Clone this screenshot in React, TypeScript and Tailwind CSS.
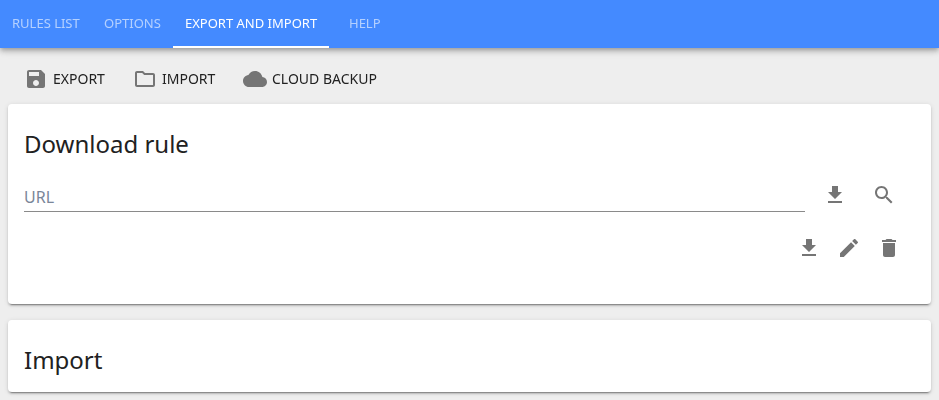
import React from 'react';

const ICONS = {
  save: 'M17 3H5c-1.11 0-2 .9-2 2v14c0 1.1.89 2 2 2h14c1.1 0 2-.9 2-2V7l-4-4zm-5 16c-1.66 0-3-1.34-3-3s1.34-3 3-3 3 1.34 3 3-1.34 3-3 3zm3-10H5V5h10v4z',
  folder: 'M9.17 6l2 2H20v10H4V6h5.17M10 4H4c-1.1 0-1.99.9-1.99 2L2 18c0 1.1.9 2 2 2h16c1.1 0 2-.9 2-2V8c0-1.1-.9-2-2-2h-8l-2-2z',
  cloud: 'M19.35 10.04C18.67 6.59 15.64 4 12 4 9.11 4 6.6 5.64 5.35 8.04 2.34 8.36 0 10.91 0 14c0 3.31 2.69 6 6 6h13c2.76 0 5-2.24 5-5 0-2.64-2.05-4.78-4.65-4.96z',
  download: 'M19 9h-4V3H9v6H5l7 7 7-7zM5 18v2h14v-2H5z',
  search: 'M15.5 14h-.79l-.28-.27C15.41 12.59 16 11.11 16 9.5 16 5.91 13.09 3 9.5 3S3 5.91 3 9.5 5.91 16 9.5 16c1.61 0 3.09-.59 4.23-1.57l.27.28v.79l5 4.99L20.49 19l-4.99-5zm-6 0C7.01 14 5 11.99 5 9.5S7.01 5 9.5 5 14 7.01 14 9.5 11.99 14 9.5 14z',
  edit: 'M3 17.25V21h3.75L17.81 9.94l-3.75-3.75L3 17.25zM20.71 7.04c.39-.39.39-1.02 0-1.41l-2.34-2.34c-.39-.39-1.02-.39-1.41 0l-1.83 1.83 3.75 3.75 1.83-1.83z',
  trash: 'M6 19c0 1.1.9 2 2 2h8c1.1 0 2-.9 2-2V7H6v12zM19 4h-3.5l-1-1h-5l-1 1H5v2h14V4z',
};

function Icon({ name }: { name: keyof typeof ICONS }) {
  return (
    <svg viewBox="0 0 24 24" className="w-6 h-6 fill-[#757575] shrink-0">
      <path d={ICONS[name]} />
    </svg>
  );
}

function Tab({ label, active, className }: { label: string; active?: boolean; className: string }) {
  return (
    <div
      className={
        'h-12 flex items-center justify-center text-[13px] ' +
        className +
        (active ? ' text-white border-b-2 border-white pt-0.5' : ' text-white/60')
      }
    >
      <span className="will-change-transform">{label}</span>
    </div>
  );
}

function ToolButton({ icon, label, className }: { icon: keyof typeof ICONS; label: string; className: string }) {
  return (
    <div className={'flex items-center text-sm text-[#212121] ' + className}>
      <Icon name={icon} />
      <span className="will-change-transform">{label}</span>
    </div>
  );
}

const cardShadow = 'shadow-[0_2px_2px_0_rgba(0,0,0,0.14),0_3px_1px_-2px_rgba(0,0,0,0.3),0_1px_5px_0_rgba(0,0,0,0.12)]';

export default function App() {
  return (
    <div className="h-[400px] overflow-hidden bg-[#eeeeee] font-['Noto_Sans',sans-serif]">
      <div className="h-12 bg-[#448aff] flex shadow-[0_2px_4px_-1px_rgba(0,0,0,0.2),0_4px_5px_0_rgba(0,0,0,0.14),0_1px_10px_0_rgba(0,0,0,0.12)]">
        <Tab label="RULES LIST" className="w-[92px]" />
        <Tab label="OPTIONS" className="w-[81px]" />
        <Tab label="EXPORT AND IMPORT" active className="w-[156px]" />
        <Tab label="HELP" className="w-[71px]" />
      </div>

      <div className="h-14 flex items-center pl-6 pt-1.5">
        <ToolButton icon="save" label="EXPORT" className="gap-[5px] w-[109px]" />
        <ToolButton icon="folder" label="IMPORT" className="gap-[5px] w-[110px]" />
        <ToolButton icon="cloud" label="CLOUD BACKUP" className="gap-[5px]" />
      </div>

      <div className={'mx-2 h-[200px] bg-white rounded-sm px-4 pt-6 ' + cardShadow}>
        <h2 className="text-2xl leading-8 text-[#212121]">Download rule</h2>
        <div className="mt-[21px] flex items-start">
          <div className="w-[781px] h-[31px] border-b border-[#8a8a8a] text-base leading-[32px] text-[#7a8699]">URL</div>
          <div className="ml-[18px] flex gap-[25px] items-center h-[28px]">
            <Icon name="download" />
            <Icon name="search" />
          </div>
        </div>
        <div className="mt-[24px] flex justify-end gap-4 pr-[14px]">
          <Icon name="download" />
          <Icon name="edit" />
          <Icon name="trash" />
        </div>
      </div>

      <div className={'mx-2 mt-4 h-[72px] bg-white rounded-sm px-4 pt-6 ' + cardShadow}>
        <h2 className="text-2xl leading-8 text-[#212121]">Import</h2>
      </div>
    </div>
  );
}
